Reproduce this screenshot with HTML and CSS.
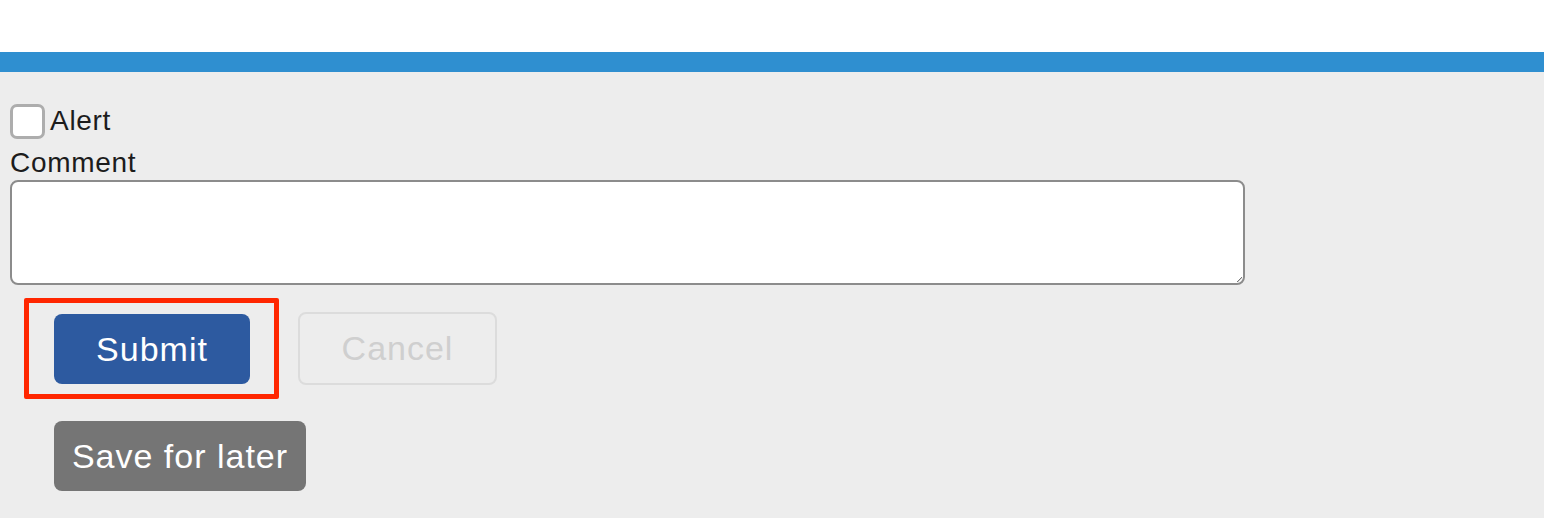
FILE: index.html
```html
<!DOCTYPE html>
<html>
<head>
<meta charset="utf-8">
<link rel="stylesheet" href="styles.css">
</head>
<body>
<div class="topbar"></div>
<main class="panel">
  <label class="check-row"><span class="checkbox"></span><span class="check-label">Alert</span></label>
  <div class="field-label">Comment</div>
  <div class="textarea"><span class="grip"></span></div>
  <div class="actions">
    <div class="highlight"><button class="btn btn-primary">Submit</button></div>
    <button class="btn btn-cancel">Cancel</button>
  </div>
  <div class="actions-2">
    <button class="btn btn-secondary">Save for later</button>
  </div>
</main>
</body>
</html>
```
FILE: styles.css
```css
html, body {
  margin: 0;
  padding: 0;
  background: #ffffff;
  font-family: "Liberation Sans", Arial, sans-serif;
  color: #1c1c1c;
}
.topbar {
  height: 20px;
  margin-top: 52px;
  background: #2f8fd0;
}
.panel {
  background: #ededed;
  height: 446px;
  padding: 32px 0 0 10px;
  box-sizing: border-box;
}
.check-row {
  display: flex;
  align-items: flex-start;
  height: 35px;
}
.checkbox {
  width: 29px;
  height: 29px;
  border: 3px solid #adadad;
  border-radius: 7px;
  background: #fff;
  flex: none;
}
.check-label {
  font-size: 28px;
  letter-spacing: 0.7px;
  margin-left: 5px;
  line-height: 33px;
}
.field-label {
  font-size: 28px;
  letter-spacing: 0.7px;
  line-height: 35px;
  height: 35px;
  padding-top: 6px;
}
.textarea {
  width: 1231px;
  height: 101px;
  border: 2px solid #8c8c8c;
  border-radius: 8px;
  background: #fff;
  position: relative;
}
.grip {
  position: absolute;
  right: 1px;
  bottom: 1px;
  width: 5px;
  height: 5px;
  background: linear-gradient(135deg, transparent 45%, #777 50%, transparent 65%);
}
.actions {
  display: flex;
  align-items: center;
  gap: 19px;
  margin-top: 13px;
  margin-left: 14px;
}
.highlight {
  border: 5px solid #ff2600;
  border-radius: 2px;
  padding: 11px 24px 10px 25px;
}
.btn {
  font-family: "Liberation Sans", Arial, sans-serif;
  font-size: 34px;
  letter-spacing: 1px;
  border-radius: 8px;
  box-sizing: border-box;
  cursor: pointer;
  padding: 0;
}
.btn-primary {
  width: 196px;
  height: 70px;
  background: #2d5aa0;
  color: #fff;
  border: none;
}
.btn-cancel {
  width: 199px;
  height: 73px;
  background: transparent;
  color: #cfcfcf;
  border: 2px solid #dcdcdc;
}
.actions-2 {
  margin-top: 22px;
  margin-left: 44px;
}
.btn-secondary {
  width: 252px;
  height: 70px;
  background: #757575;
  color: #fff;
  border: none;
}
```
